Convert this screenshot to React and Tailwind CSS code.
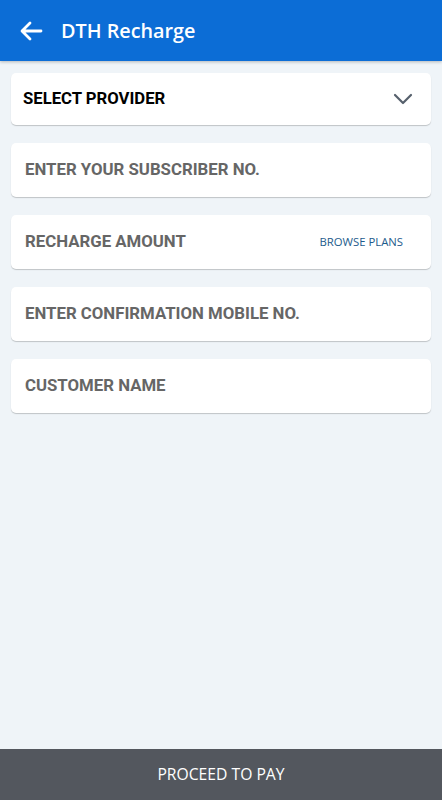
export default function App() {
  const fields = [
    "ENTER YOUR SUBSCRIBER NO.",
    "RECHARGE AMOUNT",
    "ENTER CONFIRMATION MOBILE NO.",
    "CUSTOMER NAME",
  ];

  return (
    <div className="flex flex-col h-[800px] bg-[#eff4f8]">
      <header className="h-[61px] bg-[#0c6dd6] flex items-center pl-[20px] shadow-[0_1px_3px_rgba(0,0,0,0.25)]">
        <svg width="23" height="20" viewBox="0 0 23 20" fill="none" stroke="white" strokeWidth="2.8" strokeLinecap="round" strokeLinejoin="round">
          <path d="M21 10H3M10 2L2 10L10 18" />
        </svg>
        <h1 className="ml-[18px] text-white text-[19.8px] font-semibold font-['Open_Sans',sans-serif]">DTH Recharge</h1>
      </header>

      <main className="flex-1 px-[11px] pt-[12px] flex flex-col gap-[18px]">
        <div className="h-[52px] bg-white rounded-[5px] shadow-[0_1px_1px_rgba(0,0,0,0.2)] flex items-center justify-between pl-[12px] pr-[18px]">
          <span className="text-[16.7px] font-bold text-black font-['Roboto',sans-serif]">SELECT PROVIDER</span>
          <svg width="20" height="12" viewBox="0 0 20 12" fill="none" stroke="#56606c" strokeWidth="2.2" strokeLinecap="round" strokeLinejoin="round">
            <path d="M2 2L10 10L18 2" />
          </svg>
        </div>
        {fields.map((f) => (
          <div key={f} className="h-[54px] bg-white rounded-[5px] shadow-[0_1px_1px_rgba(0,0,0,0.2)] flex items-center justify-between pl-[14px] pr-[28px]">
            <span className="text-[16.8px] font-bold text-[#666666] font-['Roboto',sans-serif]">{f}</span>
            {f === "RECHARGE AMOUNT" && (
              <span className="text-[11.3px] text-[#1d5b8c] font-['Open_Sans',sans-serif]">BROWSE PLANS</span>
            )}
          </div>
        ))}
      </main>

      <footer className="h-[51px] bg-[#53575e] flex items-center justify-center">
        <span className="text-white text-[15.7px] font-medium font-['Open_Sans',sans-serif]">PROCEED TO PAY</span>
      </footer>
    </div>
  );
}
